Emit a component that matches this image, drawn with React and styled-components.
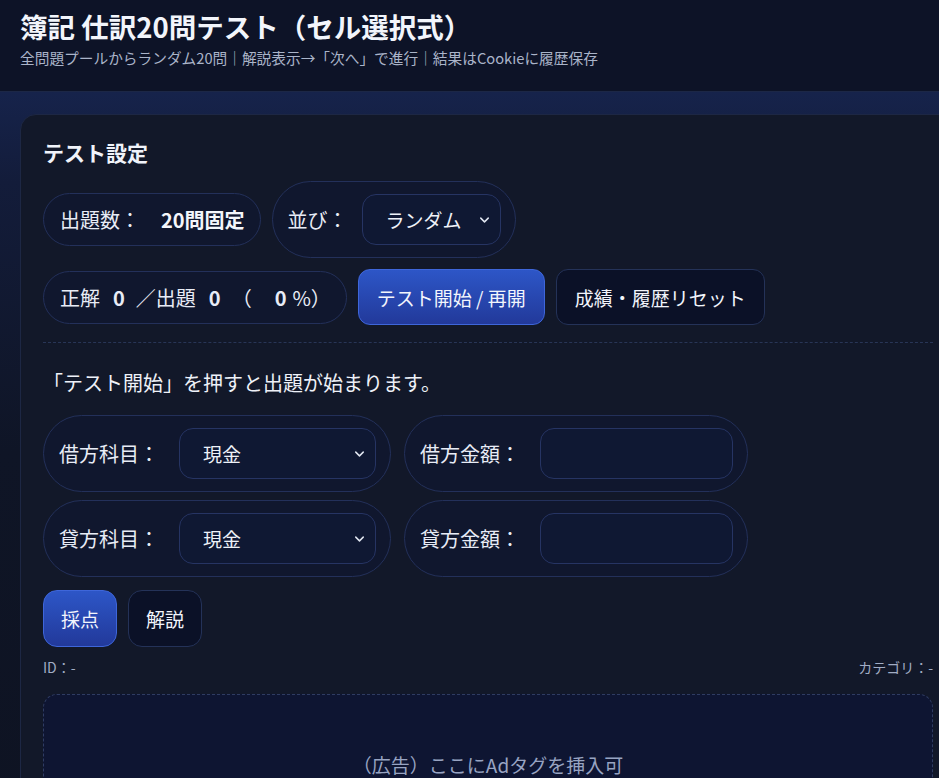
import { ChevronDown } from "lucide-react"
import styled, { createGlobalStyle } from "styled-components"

const GlobalStyle = createGlobalStyle`
  html, body {
    margin: 0;
    padding: 0;
    background: #0e1322;
    overflow: hidden;
  }
  body {
    font-family: "Noto Sans CJK JP", "Noto Sans", "Liberation Sans", sans-serif;
    color: #e8ecf6;
  }
  * { box-sizing: border-box; }
`

const App = () => {
  return (
    <>
      <GlobalStyle />
      <Header>
        <Title>簿記 仕訳20問テスト（セル選択式）</Title>
        <Subtitle>全問題プールからランダム20問｜解説表示→「次へ」で進行｜結果はCookieに履歴保存</Subtitle>
      </Header>

      <Main>
        <Card>
          <CardTitle>テスト設定</CardTitle>

          <Row>
            <Pill>
              <Label gap={21}>出題数：</Label>
              <Strong>20問固定</Strong>
            </Pill>
            <Pill tight>
              <Label gap={14}>並び：</Label>
              <SelectBox width={139}>
                <Select defaultValue="random">
                  <option value="random">ランダム</option>
                  <option value="order">出題順</option>
                </Select>
                <Chevron size={15} strokeWidth={2.4} />
              </SelectBox>
            </Pill>
          </Row>

          <Row>
            <Pill>
              正解<Num>0</Num>／出題<Num>0</Num>（<Num wide>0</Num>%）
            </Pill>
            <Button primary>テスト開始 / 再開</Button>
            <Button>成績・履歴リセット</Button>
          </Row>

          <Divider />

          <Prompt>「テスト開始」を押すと出題が始まります。</Prompt>

          <FieldGrid>
            <Pill tight>
              <Label gap={20}>借方科目：</Label>
              <SelectBox width={197}>
                <Select defaultValue="cash">
                  <option value="cash">現金</option>
                </Select>
                <Chevron size={15} strokeWidth={2.4} />
              </SelectBox>
            </Pill>
            <Pill tight>
              <Label gap={20}>借方金額：</Label>
              <Input type="text" />
            </Pill>
            <Pill tight>
              <Label gap={20}>貸方科目：</Label>
              <SelectBox width={197}>
                <Select defaultValue="cash">
                  <option value="cash">現金</option>
                </Select>
                <Chevron size={15} strokeWidth={2.4} />
              </SelectBox>
            </Pill>
            <Pill tight>
              <Label gap={20}>貸方金額：</Label>
              <Input type="text" />
            </Pill>
          </FieldGrid>

          <Actions>
            <Button primary small>採点</Button>
            <Button small>解説</Button>
          </Actions>

          <Meta>
            <span>ID：-</span>
            <span>カテゴリ：-</span>
          </Meta>

          <AdBox>（広告）ここにAdタグを挿入可</AdBox>
        </Card>
      </Main>
    </>
  )
}

export default App


const Header = styled.header`
  background: #0d1327;
  border-bottom: 1px solid #1c2746;
  padding: 8px 20px 0;
  height: 92px;
`

const Title = styled.h1`
  margin: 0;
  font-size: 27.5px;
  font-weight: 700;
  line-height: 36px;
  color: #f2f5fb;
`

const Subtitle = styled.p`
  margin: 3px 0 0;
  font-size: 14.7px;
  line-height: 22px;
  color: #aab4c9;
`

const Main = styled.main`
  padding: 22px 20px 0;
  min-height: 700px;
  background: linear-gradient(180deg, #16234b 0%, #131c3a 90px, #0f1526 360px, #0e1322 100%);
`

const Card = styled.section`
  width: 936px;
  background: #121829;
  border: 1px solid #1d2744;
  border-radius: 16px;
  padding: 22px 22px 40px;
`

const CardTitle = styled.h2`
  margin: 0 0 14px;
  font-size: 21px;
  font-weight: 700;
  line-height: 30px;
  color: #f0f3fa;
`

const Row = styled.div`
  display: flex;
  align-items: center;
  gap: 11px;
  & + & {
    margin-top: 11px;
  }
`

const Pill = styled.div`
  display: flex;
  align-items: center;
  background: #10172e;
  border: 1px solid #23305a;
  border-radius: 999px;
  padding: ${(p) => (p.tight ? "12px 14px 12px 15px" : "12px 15px 12px 16px")};
  font-size: 20px;
  line-height: 27px;
  color: #e8ecf6;
  white-space: nowrap;
`

const Label = styled.span`
  margin-right: ${(p) => p.gap}px;
`

const Strong = styled.b`
  font-weight: 700;
  color: #f4f6fb;
`

const Num = styled.b`
  font-weight: 700;
  margin: ${(p) => (p.wide ? "0 6px 0 23px" : "0 11px 0 13px")};
`

const SelectBox = styled.div`
  position: relative;
  width: ${(p) => p.width}px;
`

const Select = styled.select`
  appearance: none;
  display: block;
  width: 100%;
  height: 51px;
  background: #0f1833;
  border: 1px solid #263463;
  border-radius: 14px;
  padding: 0 30px 0 23px;
  font-family: inherit;
  font-size: 19px;
  color: #eef1f8;
  outline: none;
`

const Chevron = styled(ChevronDown)`
  position: absolute;
  right: 9px;
  top: 50%;
  transform: translateY(-50%);
  color: #dfe4ef;
  pointer-events: none;
`

const Input = styled.input`
  display: block;
  width: 193px;
  height: 51px;
  background: #0f1833;
  border: 1px solid #263463;
  border-radius: 14px;
  padding: 0 14px;
  font-family: inherit;
  font-size: 19px;
  color: #eef1f8;
  outline: none;
`

const Button = styled.button`
  height: ${(p) => (p.small ? 57 : 56)}px;
  padding: 0 ${(p) => (p.small ? 17 : 18)}px;
  border-radius: ${(p) => (p.small ? 14 : 12)}px;
  font-family: inherit;
  font-size: 19px;
  font-weight: 400;
  color: #f2f5fc;
  cursor: pointer;
  background: ${(p) => (p.primary ? "linear-gradient(180deg, #2d56c7 0%, #22399a 100%)" : "#0b1127")};
  border: 1px solid ${(p) => (p.primary ? "#3e66da" : "#243258")};
  white-space: nowrap;
`

const Divider = styled.hr`
  margin: 17px 0 0;
  border: 0;
  border-top: 1px dashed #283556;
`

const Prompt = styled.p`
  margin: 25px 0 17px;
  font-size: 20px;
  line-height: 30px;
  color: #eef1f8;
`

const FieldGrid = styled.div`
  display: grid;
  grid-template-columns: max-content max-content;
  column-gap: 13px;
  row-gap: 8px;
`

const Actions = styled.div`
  display: flex;
  gap: 11px;
  margin-top: 13px;
`

const Meta = styled.div`
  display: flex;
  justify-content: space-between;
  margin-top: 10px;
  font-size: 14px;
  line-height: 20px;
  color: #a1acc4;
`

const AdBox = styled.div`
  margin-top: 17px;
  height: 140px;
  display: flex;
  align-items: center;
  justify-content: center;
  border: 1px dashed #2f3c62;
  border-radius: 14px;
  background: #0e1532;
  font-size: 19px;
  color: #98a4c2;
`
